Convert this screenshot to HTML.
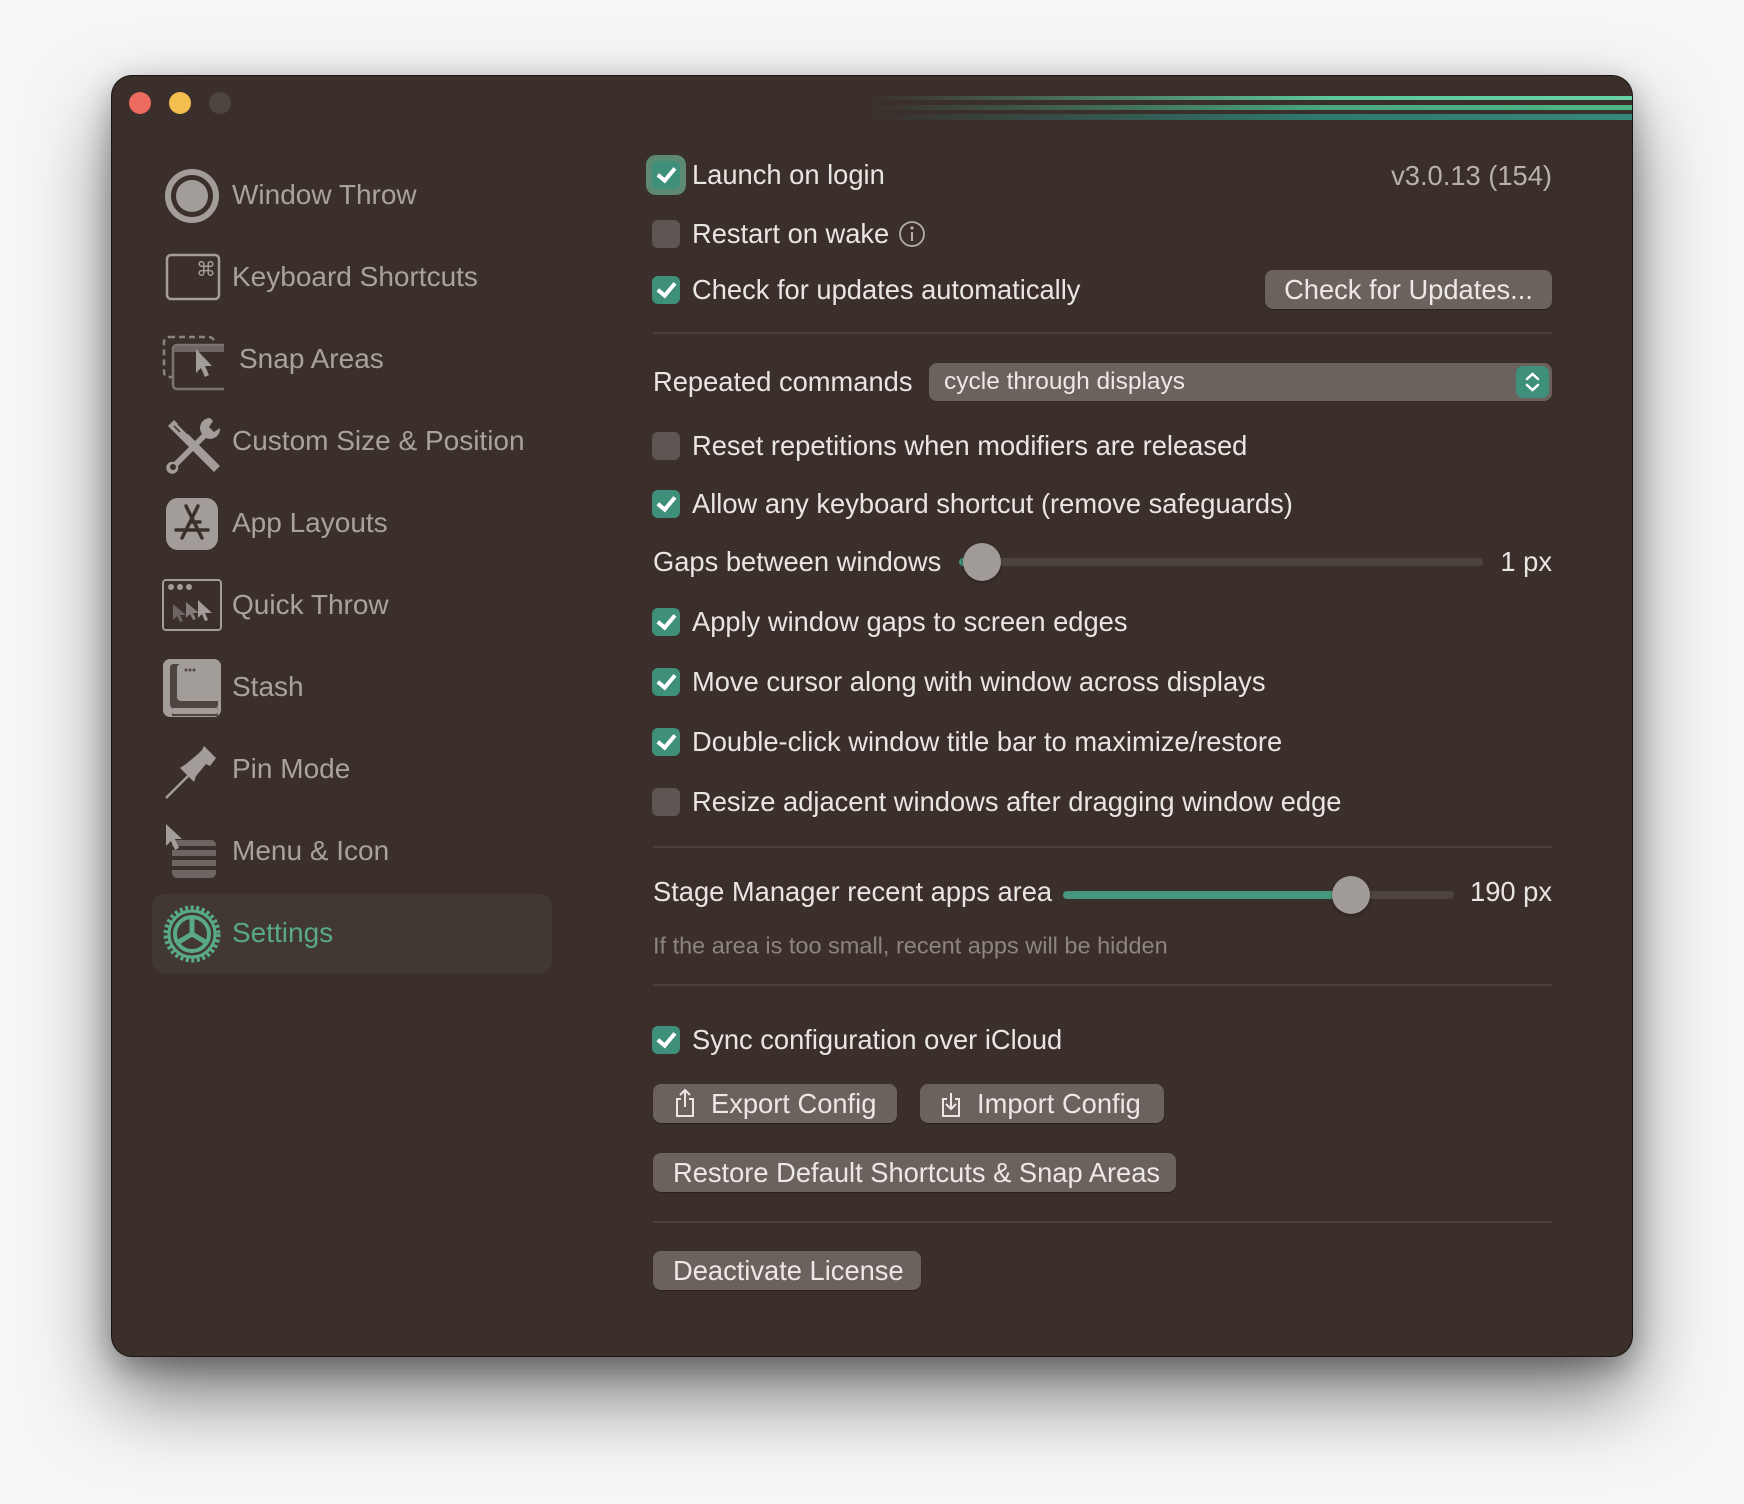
<!DOCTYPE html>
<html><head><meta charset="utf-8"><style>
*{margin:0;padding:0;box-sizing:border-box}
body{width:1744px;height:1504px;background:#f6f6f6;position:relative;overflow:hidden;font-family:"Liberation Sans",sans-serif}
.win{position:absolute;left:112px;top:76px;width:1520px;height:1280px;background:#3a2f2b;border-radius:20px;box-shadow:0 0 0 1px #1a1412,0 40px 80px rgba(0,0,0,.5),0 10px 30px rgba(0,0,0,.3);overflow:hidden}
.a{position:absolute}
.tl{position:absolute;width:22px;height:22px;border-radius:50%;top:92px}
.sb{position:absolute;left:232px;font-size:28px;color:#a8a29e;transform:translateY(-50%);white-space:nowrap}
.ic{position:absolute;left:160px;width:64px;height:64px;transform:translateY(-50%)}
.t{position:absolute;left:692px;font-size:27.3px;color:#e9e5e2;transform:translateY(-50%);white-space:nowrap}
.cb{position:absolute;left:652px;width:28px;height:28px;border-radius:6px;transform:translateY(-50%);background:#5e5652}
.cb.on{background:#3f907a}
.cb.on::after{content:"";position:absolute;left:9px;top:3px;width:7px;height:14px;border:solid #fff;border-width:0 4px 4px 0;transform:rotate(40deg)}
.sep{position:absolute;left:653px;width:899px;height:2px;background:#4a403c}
.btn{position:absolute;height:39px;background:#6b625e;border-radius:8px;color:#ece8e5;font-size:27.3px;line-height:39px;padding:0 20px;white-space:nowrap;box-shadow:0 1px 1px rgba(0,0,0,.3)}
.track{position:absolute;height:8px;border-radius:4px;background:#4d4440}
.knob{position:absolute;width:38px;height:38px;border-radius:50%;background:#a19b97;box-shadow:0 1px 3px rgba(0,0,0,.4)}
</style></head><body>
<div class="win"></div>
<div class="a" style="left:870px;top:96px;width:762px;height:4px;background:linear-gradient(90deg,rgba(93,199,154,0),#5dc79a 60%,#6ad3a6)"></div>
<div class="a" style="left:870px;top:105px;width:762px;height:5px;background:linear-gradient(90deg,rgba(72,168,124,0),#48a87c 60%,#50b585)"></div>
<div class="a" style="left:870px;top:114px;width:762px;height:6px;background:linear-gradient(90deg,rgba(46,122,110,0),#2e7a6e 60%,#358878)"></div>
<div class="tl" style="left:129px;background:#ec6a5e"></div>
<div class="tl" style="left:169px;background:#f4bf4f"></div>
<div class="tl" style="left:209px;background:#4e4541"></div>

<div class="a" style="left:152px;top:894px;width:400px;height:79px;background:#413733;border-radius:12px"></div>
<svg class="ic" style="top:196px" viewBox="0 0 64 64"><circle cx="32" cy="32" r="24" fill="none" stroke="#a39d99" stroke-width="6"/><circle cx="32" cy="32" r="16" fill="#a39d99"/></svg>
<div class="sb" style="top:195px">Window Throw</div>
<svg class="ic" style="top:278px" viewBox="0 0 64 64"><rect x="7" y="9" width="52" height="44" rx="4" fill="none" stroke="#a39d99" stroke-width="2.5"/><text x="36" y="30" font-size="20" fill="#a39d99" font-family="DejaVu Sans">⌘</text></svg>
<div class="sb" style="top:277px">Keyboard Shortcuts</div>
<svg class="ic" style="top:361px" viewBox="0 0 64 64"><rect x="4" y="8" width="50" height="40" rx="5" fill="none" stroke="#8a837f" stroke-width="2.5" stroke-dasharray="6 4"/><rect x="13" y="16" width="56" height="44" rx="4" fill="#3a2f2b" stroke="#7c7470" stroke-width="2.5"/><rect x="14" y="17" width="54" height="6" fill="#6d6561"/><path d="M36 20 L36 44 L41 39 L45 48 L49 46 L45 37 L52 37Z" fill="#a39d99"/></svg>
<div class="sb" style="top:359px;left:239px">Snap Areas</div>
<svg class="ic" style="top:442px" viewBox="0 0 64 64"><path d="M8 16 L14 10 L60 56 L54 62Z" fill="#a39d99"/><path d="M14 16 L20 22 M18 14 L22 18 M22 18 L28 24" stroke="#3a2f2b" stroke-width="1.5"/><path d="M50 8 a10 10 0 0 0 -8 16 L14 52 a6 6 0 1 0 4 4 L46 28 a10 10 0 0 0 14 -10 l-6 4 -5 -5 4 -6z" fill="#a39d99"/><circle cx="13" cy="57" r="3" fill="#3a2f2b"/></svg>
<div class="sb" style="top:441px">Custom Size &amp; Position</div>
<svg class="ic" style="top:524px" viewBox="0 0 64 64"><rect x="6" y="6" width="52" height="52" rx="12" fill="#a39d99"/><path d="M26 14 L42 46 M38 14 L22 46 M16 38 H48 M30 30 H40" stroke="#3a2f2b" stroke-width="3.5" stroke-linecap="round"/></svg>
<div class="sb" style="top:523px">App Layouts</div>
<svg class="ic" style="top:606px" viewBox="0 0 64 64"><rect x="3" y="6" width="58" height="50" rx="3" fill="none" stroke="#a39d99" stroke-width="2"/><circle cx="11" cy="13" r="3" fill="#a39d99"/><circle cx="20" cy="13" r="3" fill="#a39d99"/><circle cx="29" cy="13" r="3" fill="#a39d99"/><path d="M13 30 v16 l4-4 3 6 3-1-3-6 6 0z" fill="#6d6561"/><path d="M26 28 v16 l4-4 3 6 3-1-3-6 6 0z" fill="#857d79"/><path d="M38 26 v18 l4-4 3 7 3-1-3-7 7 0z" fill="#a39d99"/></svg>
<div class="sb" style="top:605px">Quick Throw</div>
<svg class="ic" style="top:688px" viewBox="0 0 64 64"><rect x="3" y="3" width="58" height="58" rx="7" fill="#a39d99"/><rect x="10" y="8" width="48" height="44" rx="3" fill="#4e4541"/><rect x="17" y="8" width="44" height="37" rx="4" fill="#a39d99"/><rect x="12" y="52" width="46" height="8" fill="#4e4541"/><rect x="12" y="52" width="46" height="6" rx="2" fill="#a39d99"/><circle cx="26" cy="14" r="1.5" fill="#4e4541"/><circle cx="30" cy="14" r="1.5" fill="#4e4541"/><circle cx="34" cy="14" r="1.5" fill="#4e4541"/></svg>
<div class="sb" style="top:687px">Stash</div>
<svg class="ic" style="top:770px" viewBox="0 0 64 64"><path d="M6 60 L28 38" stroke="#a39d99" stroke-width="2.5"/><path d="M20 30 L34 44 L36 38 L46 26 L50 28 L56 20 L44 8 L42 12 L38 16 L26 26Z" fill="#a39d99"/></svg>
<div class="sb" style="top:769px">Pin Mode</div>
<svg class="ic" style="top:852px" viewBox="0 0 64 64"><rect x="12" y="20" width="44" height="38" rx="5" fill="#6d6561"/><rect x="12" y="26" width="44" height="4" fill="#3a2f2b"/><rect x="12" y="36" width="44" height="4" fill="#3a2f2b"/><rect x="12" y="46" width="44" height="4" fill="#3a2f2b"/><path d="M6 4 V26 L11 21 L15 30 L19 28 L15 19 L22 19Z" fill="#a39d99"/></svg>
<div class="sb" style="top:851px">Menu &amp; Icon</div>
<svg class="ic" style="top:934px" viewBox="0 0 64 64"><circle cx="32" cy="32" r="26" fill="none" stroke="#5aa985" stroke-width="5" stroke-dasharray="3 2.5"/><circle cx="32" cy="32" r="23" fill="none" stroke="#5aa985" stroke-width="3"/><circle cx="32" cy="32" r="17" fill="none" stroke="#5aa985" stroke-width="4"/><path d="M32 32 L32 15 M32 32 L17 41 M32 32 L47 41" stroke="#5aa985" stroke-width="5"/></svg>
<div class="sb" style="top:933px;color:#5aa985">Settings</div>

<div class="a" style="left:646px;top:155px;width:40px;height:40px;border-radius:10px;background:#5e8a74"></div>
<div class="cb on" style="top:175px"></div><div class="t" style="top:175px">Launch on login</div>
<div class="t" style="top:176px;left:auto;right:192px;color:#b7b0ac">v3.0.13 (154)</div>
<div class="cb" style="top:234px"></div><div class="t" style="top:234px">Restart on wake</div>
<svg class="a" style="left:898px;top:220px" width="28" height="28" viewBox="0 0 28 28"><circle cx="14" cy="14" r="12" fill="none" stroke="#b5aeaa" stroke-width="1.8"/><circle cx="14" cy="8" r="1.6" fill="#b5aeaa"/><path d="M14 12 V21" stroke="#b5aeaa" stroke-width="2"/></svg>
<div class="cb on" style="top:290px"></div><div class="t" style="top:290px">Check for updates automatically</div>
<div class="btn" style="left:1265px;top:270px;width:287px;text-align:center;padding:0">Check for Updates...</div>
<div class="sep" style="top:332px"></div>
<div class="t" style="top:382px;left:653px">Repeated commands</div>
<div class="a" style="left:929px;top:363px;width:623px;height:38px;background:#6b625e;border-radius:8px"></div>
<div class="a" style="left:944px;top:382px;font-size:24.5px;color:#ece8e5;transform:translateY(-50%)">cycle through displays</div>
<svg class="a" style="left:1516px;top:366px" width="33" height="32" viewBox="0 0 33 32"><rect width="33" height="32" rx="7" fill="#3f907a"/><path d="M11 13 L16.5 8 L22 13 M11 19 L16.5 24 L22 19" fill="none" stroke="#fff" stroke-width="2.5" stroke-linecap="round"/></svg>
<div class="cb" style="top:446px"></div><div class="t" style="top:446px">Reset repetitions when modifiers are released</div>
<div class="cb on" style="top:504px"></div><div class="t" style="top:504px">Allow any keyboard shortcut (remove safeguards)</div>
<div class="t" style="top:562px;left:653px">Gaps between windows</div>
<div class="track" style="left:959px;top:558px;width:524px"></div>
<div class="a" style="left:959px;top:558px;width:20px;height:8px;border-radius:4px;background:#3f907a"></div>
<div class="knob" style="left:963px;top:543px"></div>
<div class="t" style="top:562px;left:auto;right:192px">1 px</div>
<div class="cb on" style="top:622px"></div><div class="t" style="top:622px">Apply window gaps to screen edges</div>
<div class="cb on" style="top:682px"></div><div class="t" style="top:682px">Move cursor along with window across displays</div>
<div class="cb on" style="top:742px"></div><div class="t" style="top:742px">Double-click window title bar to maximize/restore</div>
<div class="cb" style="top:802px"></div><div class="t" style="top:802px">Resize adjacent windows after dragging window edge</div>
<div class="sep" style="top:846px"></div>
<div class="t" style="top:892px;left:653px">Stage Manager recent apps area</div>
<div class="track" style="left:1063px;top:891px;width:391px"></div>
<div class="a" style="left:1063px;top:891px;width:290px;height:8px;border-radius:4px;background:#46977e"></div>
<div class="knob" style="left:1332px;top:876px"></div>
<div class="t" style="top:892px;left:auto;right:192px">190 px</div>
<div class="t" style="top:946px;left:653px;font-size:23.5px;color:#8d8480">If the area is too small, recent apps will be hidden</div>
<div class="sep" style="top:984px"></div>
<div class="cb on" style="top:1040px"></div><div class="t" style="top:1040px">Sync configuration over iCloud</div>
<div class="btn" style="left:653px;top:1084px;width:244px;padding-left:58px">Export Config</div>
<svg class="a" style="left:672px;top:1087px" width="26" height="32" viewBox="0 0 26 32"><path d="M9 12 H5 V29 H21 V12 H17 M13 20 V3 M8 8 L13 3 L18 8" fill="none" stroke="#ece8e5" stroke-width="2"/></svg>
<div class="btn" style="left:920px;top:1084px;width:244px;padding-left:57px">Import Config</div>
<svg class="a" style="left:938px;top:1087px" width="26" height="32" viewBox="0 0 26 32"><path d="M9 12 H5 V29 H21 V12 H17 M13 6 V22 M8 17 L13 22 L18 17" fill="none" stroke="#ece8e5" stroke-width="2"/></svg>
<div class="btn" style="left:653px;top:1153px;width:523px">Restore Default Shortcuts &amp; Snap Areas</div>
<div class="sep" style="top:1221px"></div>
<div class="btn" style="left:653px;top:1251px;width:268px">Deactivate License</div>
</body></html>
